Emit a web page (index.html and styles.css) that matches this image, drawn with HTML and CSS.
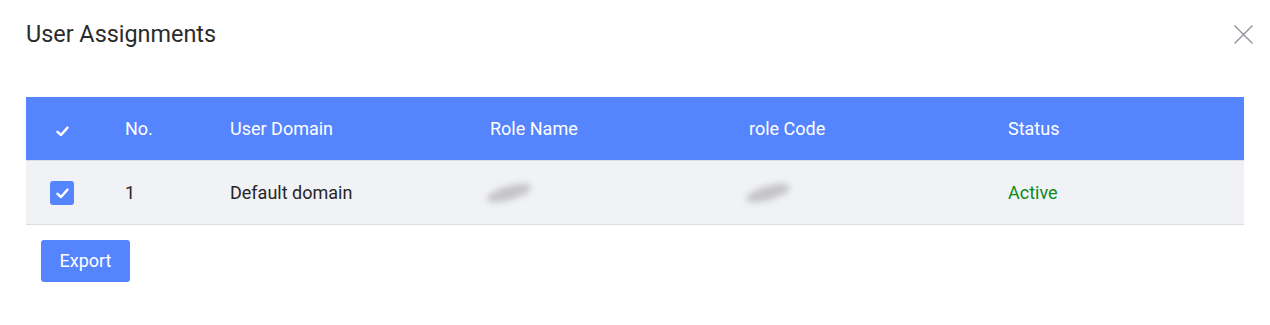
FILE: index.html
```html
<!DOCTYPE html>
<html>
<head>
<meta charset="utf-8">
<link rel="stylesheet" href="styles.css">
</head>
<body>
<div class="dialog">
  <div class="dialog-header">
    <h1 class="title">User Assignments</h1>
    <button class="close" aria-label="Close">
      <svg width="19" height="19" viewBox="0 0 19 19"><path d="M0.5 0.5L18.5 18.5M18.5 0.5L0.5 18.5" stroke="#8f949c" stroke-width="1.4" fill="none"/></svg>
    </button>
  </div>
  <table class="grid">
    <colgroup>
      <col class="c-check"><col class="c-no"><col class="c-domain"><col class="c-role"><col class="c-code"><col class="c-status">
    </colgroup>
    <thead>
      <tr>
        <th class="cell-check"><svg class="hcheck" width="13" height="11" viewBox="0 0 13 11"><path d="M1.5 5.8L5 9L11.5 1.6" stroke="#fff" stroke-width="2.4" fill="none" stroke-linecap="round" stroke-linejoin="round"/></svg></th>
        <th>No.</th>
        <th>User Domain</th>
        <th>Role Name</th>
        <th>role Code</th>
        <th>Status</th>
      </tr>
    </thead>
    <tbody>
      <tr>
        <td class="cell-check"><span class="checkbox"><svg width="13" height="11" viewBox="0 0 13 11"><path d="M1.5 5.8L5 9L11.5 1.6" stroke="#fff" stroke-width="2.4" fill="none" stroke-linecap="round" stroke-linejoin="round"/></svg></span></td>
        <td>1</td>
        <td>Default domain</td>
        <td><span class="blur"></span></td>
        <td><span class="blur"></span></td>
        <td class="active">Active</td>
      </tr>
    </tbody>
  </table>
  <div class="actions">
    <button class="btn">Export</button>
  </div>
</div>
</body>
</html>
```
FILE: styles.css
```css
* { box-sizing: border-box; }
html, body { margin: 0; padding: 0; background: #fff; }
body { font-family: Roboto, "Liberation Sans", sans-serif; color: #262626; }
.dialog { width: 1270px; height: 325px; padding: 0 26px; }
.dialog-header { display: flex; justify-content: space-between; align-items: center; height: 68px; }
.title { margin: 0; font-size: 23.4px; font-weight: 400; color: #2b2b2b; }
.close { border: 0; background: none; padding: 0; margin-right: -9px; width: 19px; height: 19px; cursor: pointer; display: flex; }
.grid { margin-top: 29px; width: 1218px; border-collapse: collapse; table-layout: fixed; }
.c-check { width: 79px; }
.c-no { width: 105px; }
.c-domain { width: 260px; }
.c-role { width: 259px; }
.c-code { width: 259px; }
th, td { text-align: left; padding: 0 0 0 20px; font-size: 18px; font-weight: 400; }
thead tr { background: #5584ff; height: 63px; }
th { color: #fff; }
tbody tr { background: #f1f2f6; height: 64px; border-top: 1px solid #dcdde2; border-bottom: 1px solid #dcdde2; }
td { color: #262626; }
.cell-check { padding: 0 0 0 24px; }
.hcheck { display: block; margin-left: 6px; margin-top: 6px; }
.checkbox { width: 24px; height: 24px; border-radius: 3px; background: #5584ff; display: flex; align-items: center; justify-content: center; margin-top: 2px; }
.blur { display: block; width: 46px; height: 14px; margin-left: -4px; background: repeating-linear-gradient(-20deg, #8a8a8a 0 2px, #d0d0d0 2px 4px); border-radius: 50%; transform: rotate(-16deg); filter: blur(3px); opacity: 0.65; margin-top: 2px; }
.active { color: #0a8a1a; }
.actions { padding: 15px 0 0 15px; }
.btn { width: 89px; height: 42px; border: 0; border-radius: 3px; background: #5584ff; color: #fff; font-family: Roboto, "Liberation Sans", sans-serif; font-size: 18px; cursor: pointer; }
```
